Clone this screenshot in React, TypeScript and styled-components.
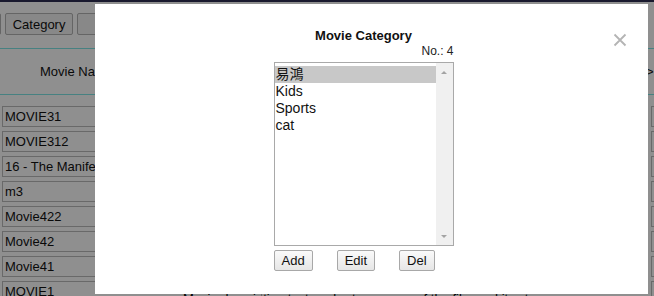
import React from 'react';
import styled, {createGlobalStyle} from 'styled-components';

const GlobalStyle = createGlobalStyle`
  html, body {
    margin: 0;
    padding: 0;
    background: #ffffff;
    overflow: hidden;
  }
  body {
    font-family: "Liberation Sans", Arial, "Noto Sans CJK TC", sans-serif;
    font-size: 13px;
    color: #111;
  }
`;

const movies = [
  'MOVIE31',
  'MOVIE312',
  '16 - The Manifesto',
  'm3',
  'Movie422',
  'Movie42',
  'Movie41',
  'MOVIE1',
];

const categories = ['易鴻', 'Kids', 'Sports', 'cat'];

// background page (sits under the overlay)
const Page = styled.div`
  width: 654px;
  height: 296px;
  overflow: hidden;
`;

const TopBar = styled.div`
  height: 2px;
  background: #2e2e52;
`;

const Toolbar = styled.div`
  display: flex;
  gap: 4px;
  padding-top: 11px;
  margin-left: -50px;
  height: 34px;
  box-sizing: border-box;
`;

const ToolButton = styled.button<{$wide?: boolean}>`
  height: 22px;
  padding: 0 ${p => (p.$wide ? 22 : 7)}px;
  border: 1px solid #b4b4b4;
  border-radius: 2px;
  background: #f2f2f2;
  font: 13px "Liberation Sans", Arial, sans-serif;
  color: #111;
`;

const Table = styled.div`
  display: grid;
  grid-template-columns: 180px 466px 1fr;
  grid-template-rows: 57px;
  grid-auto-rows: 25px;
  border-top: 1px solid #7fe6e6;
  margin-top: 12px;
`;

const HeadCell = styled.div<{$pad?: number}>`
  height: 45px;
  display: flex;
  align-items: center;
  padding-left: ${p => p.$pad ?? 0}px;
  border-bottom: 1px solid #7fe6e6;
  white-space: nowrap;
  overflow: hidden;
`;

const NameInput = styled.div`
  width: 260px;
  height: 21px;
  margin-left: 2px;
  box-sizing: border-box;
  border: 1px solid #bcbcbc;
  background: #fff;
  padding-left: 2px;
  line-height: 19px;
  white-space: nowrap;
  overflow: hidden;
`;

const Desc = styled.div`
  padding: 11px 0 0 3px;
  line-height: 14px;
  white-space: nowrap;
  overflow: hidden;
  color: #000;
`;

const SideInput = styled(NameInput)`
  margin-left: 5px;
`;

// overlay + dialog
const Overlay = styled.div`
  position: fixed;
  inset: 0;
  background: rgba(0, 0, 0, 0.44);
`;

const Dialog = styled.div`
  position: fixed;
  top: 4px;
  left: 95px;
  width: 553px;
  height: 290px;
  background: #fff;
`;

const CloseButton = styled.button`
  position: absolute;
  top: 29px;
  right: 21px;
  width: 14px;
  height: 14px;
  padding: 0;
  border: 0;
  background: none;
  display: flex;
`;

const DialogBody = styled.div`
  display: flex;
  justify-content: center;
  padding: 24px 16px 0 0;
`;

const Panel = styled.div`
  width: 180px;
  display: flex;
  flex-direction: column;
`;

const Title = styled.div`
  font-weight: bold;
  font-size: 13px;
  line-height: 16px;
  text-align: center;
  color: #111;
`;

const Count = styled.div`
  font-size: 12px;
  line-height: 14px;
  text-align: right;
  color: #222;
  margin-bottom: 4px;
`;

const ListBox = styled.div`
  height: 184px;
  box-sizing: border-box;
  border: 1px solid #a9a9a9;
  display: flex;
`;

const Options = styled.div`
  flex: 1;
  padding-top: 3px;
`;

const Option = styled.div<{$selected?: boolean}>`
  height: 17px;
  line-height: 17px;
  font-size: 14px;
  padding-left: 1px;
  color: #111;
  background: ${p => (p.$selected ? '#c8c8c8' : 'transparent')};
`;

const ScrollBar = styled.div`
  width: 17px;
  background: #f0f0f0;
  display: flex;
  flex-direction: column;
  justify-content: space-between;
  align-items: center;
  padding: 8px 0 7px;
`;

const Arrow = styled.div<{$down?: boolean}>`
  width: 0;
  height: 0;
  border-left: 3px solid transparent;
  border-right: 3px solid transparent;
  ${p =>
    p.$down
      ? 'border-top: 3px solid #a3a3a3;'
      : 'border-bottom: 3px solid #a3a3a3;'}
`;

const Actions = styled.div`
  display: flex;
  gap: 24px;
  margin-top: 4px;
`;

const ActionButton = styled.button`
  height: 21px;
  padding: 0 7px;
  border: 1px solid #a8a8a8;
  border-radius: 2px;
  background: linear-gradient(#fafafa, #e6e6e6);
  font: 13px "Liberation Sans", Arial, sans-serif;
  color: #111;
`;

export default function App() {
  return (
    <>
      <GlobalStyle />
      <Page>
        <TopBar />
        <Toolbar>
          <ToolButton>Movie</ToolButton>
          <ToolButton>Category</ToolButton>
          <ToolButton $wide>Report</ToolButton>
        </Toolbar>
        <Table>
          <HeadCell $pad={40}>Movie Name</HeadCell>
          <HeadCell>Description</HeadCell>
          <HeadCell>&gt;</HeadCell>
          {movies.map((m, i) => (
            <React.Fragment key={m}>
              <div>
                <NameInput>{m}</NameInput>
              </div>
              <Desc>
                {i === movies.length - 1
                  ? 'Movie description text, a short summary of the film and its story.'
                  : ''}
              </Desc>
              <div>
                <SideInput />
              </div>
            </React.Fragment>
          ))}
        </Table>
      </Page>
      <Overlay />
      <Dialog>
        <CloseButton aria-label="Close">
          <svg width="14" height="14" viewBox="0 0 14 14">
            <path
              d="M1.5 1.5 L12.5 12.5 M12.5 1.5 L1.5 12.5"
              stroke="#b4b4b4"
              strokeWidth="1.8"
              fill="none"
            />
          </svg>
        </CloseButton>
        <DialogBody>
          <Panel>
            <Title>Movie Category</Title>
            <Count>No.: {categories.length}</Count>
            <ListBox>
              <Options>
                {categories.map((c, i) => (
                  <Option key={c} $selected={i === 0}>
                    {c}
                  </Option>
                ))}
              </Options>
              <ScrollBar>
                <Arrow />
                <Arrow $down />
              </ScrollBar>
            </ListBox>
            <Actions>
              <ActionButton>Add</ActionButton>
              <ActionButton>Edit</ActionButton>
              <ActionButton>Del</ActionButton>
            </Actions>
          </Panel>
        </DialogBody>
      </Dialog>
    </>
  );
}
